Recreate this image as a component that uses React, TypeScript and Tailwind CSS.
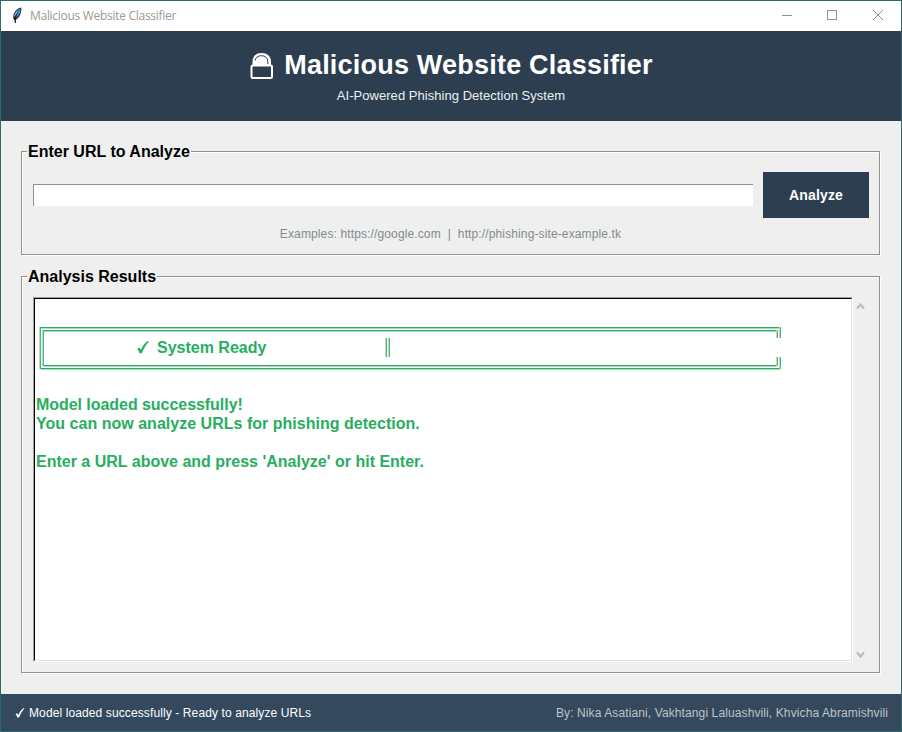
import React from "react";

function Feather() {
  return (
    <svg width="10" height="17" viewBox="0 0 10 17" className="mb-[2px] shrink-0">
      <path d="M9.300 0.500 C6 0.500 2 4.500 1.300 9 C1 11.500 1.600 13 3 13.300 C6.500 11.500 9.800 7 9.300 0.500Z" fill="#1b2a3c" />
      <path d="M8.500 1.300 C6.300 3.500 5.300 6.500 4.200 11 C6.800 9 8.900 5 8.500 1.300Z" fill="#3f8fd0" />
      <path d="M7.300 1.800 C4.400 4 2.300 7 2 10.300 C3.900 8.300 5.500 5 7.300 1.800Z" fill="#8cc4e8" />
      <path d="M3.300 10.500 L3.300 16" stroke="#111820" strokeWidth="1.200" fill="none" />
    </svg>
  );
}

function Lock() {
  return (
    <svg width="25" height="28" viewBox="0 0 25 28" className="mt-[2px] shrink-0">
      <path d="M3.500 14 V10 C3.500 4 7 1 12.500 1 C18 1 22 4 22 10 V14 Z" fill="#fff" />
      <path d="M6 8.500 C6.800 5.200 9 3.700 12.500 3.700 C16 3.700 18.500 5.700 18.800 9.200 V12" stroke="#2c3e50" strokeWidth="1" fill="none" />
      <rect x="2.500" y="13.500" width="20.500" height="12.500" rx="1.200" fill="#2c3e50" stroke="#fff" strokeWidth="2" />
    </svg>
  );
}

function Check({ className }: { className: string }) {
  return (
    <svg viewBox="0 0 12 13" className={className} fill="currentColor">
      <path d="M0.100 8 L2.300 6.800 C3.100 7.200 3.500 8 3.800 9 C5.400 5.400 7.500 2.400 10.200 0.200 L12 0.200 C9 3.700 6.700 7.600 4.900 12 L2.700 12.700 C2.200 10.800 1.500 9.300 0.100 8Z" />
    </svg>
  );
}

function TitleBar() {
  return (
    <div className="flex h-[30px] shrink-0 items-center bg-white pl-[11px]">
      <Feather />
      <span className="ml-[8px] font-['Open_Sans','Noto_Sans',sans-serif] text-[12px] leading-4 tracking-[-0.29px] whitespace-nowrap text-[#999999]">
        Malicious Website Classifier
      </span>
      <svg width="104" height="12" viewBox="0 0 104 12" className="mr-[16px] mb-[2px] ml-auto" fill="none" stroke="#919191">
        <path d="M1 6.500 H11" />
        <rect x="46.500" y="1.500" width="9" height="9" />
        <path d="M92 1 L102 11 M102 1 L92 11" />
      </svg>
    </div>
  );
}

function Group({ title, className, children }: { title: string; className: string; children: React.ReactNode }) {
  return (
    <section
      className={
        "flex flex-col border border-[#919191] shadow-[1px_1px_0_#fff,inset_1px_1px_0_#fff] " + className
      }
    >
      <h2 className="z-10 -mt-[10px] ml-[5px] h-[19px] self-start bg-[#efefef] pr-px pl-px text-[16px] leading-[19px] font-bold whitespace-nowrap text-black">
        {title}
      </h2>
      {children}
    </section>
  );
}

function Banner() {
  const line = "h-px bg-[#27ae60] shadow-[0_1px_0_#a5dfbd]";
  const post = "w-px bg-[#2fbdaa] shadow-[-1px_0_0_#dfcf94]";
  return (
    <div className="mt-[28px] ml-[5px] flex h-[42px] w-[741px] flex-col">
      <div className="flex h-[11px] justify-between">
        <div className={post + " h-[11px]"} />
        <div className="flex-1">
          <div className={line} />
          <div className="flex pt-[2px] pr-[2px] pl-[2px]">
            <div className={post + " h-[8px]"} />
            <div className={line + " flex-1"} />
            <div className={post + " h-[8px]"} />
          </div>
        </div>
        <div className={post + " h-[11px]"} />
      </div>
      <div className="flex h-[19px] items-center">
        <div className={post + " h-[19px]"} />
        <div className={post + " ml-[2px] h-[19px]"} />
        <Check className="ml-[93px] h-[13px] w-[12px]" />
        <span className="ml-[8px] w-[229px] leading-[19px] whitespace-pre">System Ready</span>
        <div className={post + " h-[19px]"} />
        <div className={post + " ml-[2px] h-[19px]"} />
      </div>
      <div className="flex h-[12px]">
        <div className={post + " h-[12px]"} />
        <div className="flex flex-1 flex-col">
          <div className="flex h-[11px] items-end pr-[2px] pl-[2px]">
            <div className={post + " mb-[2px] h-[9px]"} />
            <div className={line + " mb-[2px] flex-1"} />
            <div className={post + " mb-[2px] h-[9px]"} />
          </div>
          <div className={line} />
        </div>
        <div className={post + " h-[12px]"} />
      </div>
    </div>
  );
}

function Scrollbar() {
  return (
    <div className="ml-[3px] flex w-[9px] flex-col justify-between pt-[6px] pb-[4px] text-[#b0bec5]">
      <svg width="9" height="7" viewBox="0 0 9 7" fill="none" stroke="currentColor" strokeWidth="2.200">
        <path d="M1 5.500 L4.500 1.500 L8 5.500" />
      </svg>
      <svg width="9" height="7" viewBox="0 0 9 7" fill="none" stroke="currentColor" strokeWidth="2.200">
        <path d="M1 1.500 L4.500 5.500 L8 1.500" />
      </svg>
    </div>
  );
}

export default function App() {
  return (
    <div className="flex h-[732px] w-[902px] flex-col overflow-hidden border border-[#2c6a6b] bg-[#efefef] font-['Liberation_Sans',Arial,sans-serif]">
      <TitleBar />
      <header className="flex h-[90px] shrink-0 flex-col items-center bg-[#2c3e50] text-white">
        <div className="mt-[17px] flex h-[34px] items-center">
          <Lock />
          <h1 className="ml-[10px] text-[27px] leading-[34px] font-bold tracking-[0.21px] whitespace-nowrap">Malicious Website Classifier</h1>
        </div>
        <p className="mt-[6px] text-[13px] leading-[16px] tracking-[0.04px] text-[#ecf0f1]">AI-Powered Phishing Detection System</p>
      </header>

      <main className="flex flex-1 flex-col px-[20px] pt-[30px]">
        <Group title="Enter URL to Analyze" className="h-[104px] w-[859px]">
          <div className="mt-[11px] ml-[11px] flex items-center">
            <input className="h-[22px] w-[720px] border-t border-l border-[#919191] bg-white outline-none" />
            <button className="ml-[10px] h-[46px] w-[106px] bg-[#2c3e50] text-[14px] font-bold tracking-[0.15px] text-white">Analyze</button>
          </div>
          <p className="mt-[8px] text-center text-[12px] leading-[16px] tracking-[0.125px] whitespace-pre text-[#7f8c8d]">
            {"Examples: https://google.com  |  http://phishing-site-example.tk"}
          </p>
        </Group>

        <Group title="Analysis Results" className="mt-[21px] h-[397px] w-[859px]">
          <div className="mt-[11px] ml-[11px] flex h-[365px]">
            <div className="border border-t-[#a0a0a0] border-r-white border-b-white border-l-[#a0a0a0]">
              <div className="h-[363px] w-[818px] border border-t-black border-r-[#e3e3e3] border-b-[#e3e3e3] border-l-black bg-white text-[16px] font-bold text-[#27ae60]">
                <Banner />
                <div className="mt-[26px] ml-px leading-[19px] whitespace-nowrap">
                  <p className="tracking-[-0.05px]">Model loaded successfully!</p>
                  <p className="tracking-[0.02px]">You can now analyze URLs for phishing detection.</p>
                  <p className="mt-[19px]">Enter a URL above and press 'Analyze' or hit Enter.</p>
                </div>
              </div>
            </div>
            <Scrollbar />
          </div>
        </Group>
      </main>

      <footer className="flex h-[37px] shrink-0 items-center bg-[#34495e] pr-[13px] pl-[14px] text-[12px] tracking-[0.11px]">
        <Check className="h-[10px] w-[10px] text-white" />
        <span className="ml-[4px] text-white">Model loaded successfully - Ready to analyze URLs</span>
        <span className="ml-auto text-[#bdc3c7]">By: Nika Asatiani, Vakhtangi Laluashvili, Khvicha Abramishvili</span>
      </footer>
    </div>
  );
}
